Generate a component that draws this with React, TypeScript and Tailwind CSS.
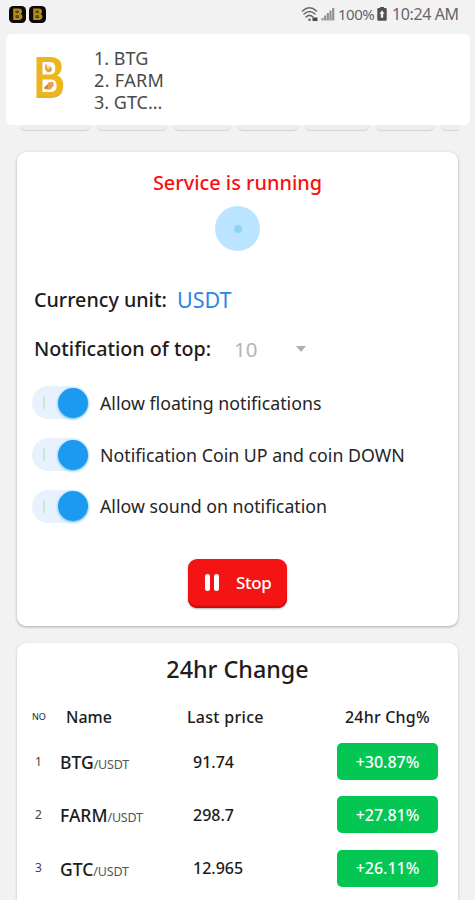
import React from 'react';

function AppBadge() {
  return (
    <svg className="h-[17px] w-[17px]" viewBox="0 0 17 17">
      <rect x="0" y="0" width="17" height="17" rx="4.5" fill="#0b0a08" />
      <path
        fillRule="evenodd"
        fill="#b58a1c"
        d="M4.200 2.500h5.600c2 0 3.200 1 3.200 2.900 0 1.200-.5 2-1.300 2.500 1.100.4 1.700 1.400 1.700 2.700 0 2.200-1.400 3.500-3.600 3.500H4.200zM6.700 4.800v2h2.800V4.800zM6.700 9.500v2.300h3V9.500z"
      />
      <path d="M7 5.800h2.200M7.200 10.600h2.200" stroke="#8a6516" strokeWidth="1" />
    </svg>
  );
}

function CoinLogo() {
  return (
    <svg className="h-[41px] w-[28px]" viewBox="0 0 28 41">
      <path
        fillRule="evenodd"
        fill="#edb61c"
        d="M0.500 0H14c7.200 0 11.700 3.300 11.700 9.800 0 4.500-1.800 7.300-5 8.800 4.200 1.300 6.600 4.500 6.600 9.600C27.300 36.300 22.500 40.500 15 40.500H0.500zM6 5v12.500h8.500c3.200 0 4.800-2.100 4.800-6.200S17.700 5 14 5zM6 22.500v12.500h9c3.700 0 5.600-2.200 5.600-6.200s-2-6.300-5.600-6.300z"
      />
      <path d="M6 5v12.500M6 22.500V35" fill="none" stroke="#d9a640" strokeWidth="0.800" />
      <path d="M0.500 40.300H15c5 0 8.700-1.800 10.800-4.800" fill="none" stroke="#cfa13a" strokeWidth="0.900" />
      <path d="M10 7.500v5.500" stroke="#eab04a" strokeWidth="2.200" />
      <circle cx="12.800" cy="12.300" r="3" fill="#eaa03c" />
      <circle cx="12.300" cy="10.600" r="1.200" fill="#fff3cf" />
      <path d="M8 30.500l5.500-5v7l-5-.5z" fill="#df8420" />
      <path d="M12 25.500l5-.8v4l-1.800 3.500H12z" fill="#e9a14f" />
      <path d="M17.500 25.500v4.500" stroke="#b9e2e4" strokeWidth="1" />
    </svg>
  );
}

function StatusIcons() {
  return (
    <svg className="h-[16px] w-[36px]" viewBox="0 0 36 16">
      <g fill="none" stroke="#666" strokeWidth="1.500" strokeLinecap="round">
        <path d="M2.500 5Q9.500-1.500 16.500 5" />
        <path d="M4 8Q9.500 3 15 8" />
        <path d="M6 11Q9.500 7.800 13 11" />
      </g>
      <circle cx="9.500" cy="13.700" r="1.300" fill="#666" />
      <path d="M12.500 11.500h5v3.500h-5z" fill="#4a4a4a" />
      <g fill="#939393">
        <path d="M21.500 12h2v2.500h-2z" />
        <path d="M24 9.500h2.200v5H24z" />
        <path d="M26.700 7h2.200v7.500h-2.200z" />
        <path d="M29.400 4.500h2.200v10h-2.200z" />
        <path d="M32.100 2h2.200v12.500h-2.200z" />
      </g>
    </svg>
  );
}

function Battery() {
  return (
    <svg className="h-[14px] w-[10px]" viewBox="0 0 10 14">
      <path d="M3 0h4v2H3z" fill="#505050" />
      <rect x="0.300" y="1" width="9.400" height="12.800" rx="1.200" fill="#505050" />
      <path d="M5 3.200L7.500 6.800H6.200v4H3.800v-4H2.500z" fill="#f2f2f2" />
    </svg>
  );
}

function ToggleRow({ label }: { label: string }) {
  return (
    <div className="flex h-[51.7px] items-center">
      <div className="flex h-[33px] w-[57px] items-center rounded-full bg-[#e7f2fe] pl-[11px]">
        <div className="h-[13px] w-[2px] bg-[#cfe8d6]" />
        <div className="ml-[13px] h-[30px] w-[30px] rounded-full bg-[#1b9af0] shadow-[0_1px_3px_rgba(27,154,240,0.700)]" />
      </div>
      <span className="ml-[11px] pt-[1px] text-[17.750px] text-[#252525]">{label}</span>
    </div>
  );
}

const toggles = [
  'Allow floating notifications',
  'Notification Coin UP and coin DOWN',
  'Allow sound on notification',
];

const coins = [
  { no: 1, name: 'BTG', price: '91.74', change: '+30.87%' },
  { no: 2, name: 'FARM', price: '298.7', change: '+27.81%' },
  { no: 3, name: 'GTC', price: '12.965', change: '+26.11%' },
];

const chips = ['w-[70px]', 'w-[70px]', 'w-[57px]', 'w-[60px]', 'w-[64px]', 'w-[58px]'];

export default function App() {
  return (
    <div className="flex h-[900px] w-[475px] flex-col overflow-hidden whitespace-nowrap bg-[#f2f2f2] font-['Noto_Sans',sans-serif] text-[#1c1c1c]">
      <header className="flex h-[34px] shrink-0 items-center pb-[6px] pl-[9px] pr-[17px] text-[#666]">
        <AppBadge />
        <div className="w-[3px]" />
        <AppBadge />
        <div className="ml-auto flex items-center">
          <StatusIcons />
          <span className="ml-[2px] w-[36px] text-[15px] tracking-[-0.500px]">100%</span>
          <div className="ml-[3px] flex"><Battery /></div>
          <span className="ml-[5px] w-[66px] text-[16px] tracking-[-0.400px]">10:24 AM</span>
        </div>
      </header>

      <section className="ml-[6px] flex h-[91px] w-[464px] shrink-0 items-center rounded-[6px] bg-white pl-[30px]">
        <div className="flex pb-[4px]"><CoinLogo /></div>
        <div className="ml-[30px] text-[18px] leading-[22px] text-[#4a4a4a]">
          <div>1. BTG</div>
          <div className="tracking-[0.350px]">2. FARM</div>
          <div>3. GTC...</div>
        </div>
      </section>

      <div className="ml-[20px] flex h-[27px] w-[439px] shrink-0 gap-[7px] overflow-hidden">
        {chips.map((w, i) => (
          <div key={i} className={`h-[5px] shrink-0 rounded-b-[6px] bg-[#eeeeee] shadow-[0_1px_1px_#d2d2d2] ${w}`} />
        ))}
        <div className="h-[5px] w-[40px] shrink-0 rounded-b-[6px] bg-[#eeeeee] shadow-[0_1px_1px_#d2d2d2]" />
      </div>

      <section className="ml-[17px] flex h-[474px] w-[441px] shrink-0 flex-col rounded-[9px] bg-white px-[15px] shadow-[0_1px_3px_rgba(0,0,0,0.300)]">
        <div className="mt-[16px] h-[30px] text-center text-[19.900px] font-medium leading-[30px] text-[#fa1010]">Service is running</div>
        <div className="ml-[183px] mt-[8px] flex h-[45px] w-[45px] items-center justify-center rounded-full bg-[#bae4ff]">
          <div className="h-[8px] w-[8px] rounded-full bg-[#8fd3fb]" />
        </div>
        <div className="mt-[34px] flex h-[30px] items-center pl-[2px] text-[19.700px]">
          <span className="w-[143px] font-medium">Currency unit:</span>
          <span className="text-[21.500px] text-[#2b86e8]">USDT</span>
        </div>
        <div className="mt-[19px] flex h-[30px] items-center pl-[2px] text-[19.700px]">
          <span className="w-[200px] font-medium">Notification of top:</span>
          <span className="w-[62px] text-[20.500px] text-[#b5b5b5]">10</span>
          <div className="h-0 w-0 border-x-[5px] border-t-[6px] border-x-transparent border-t-[#b0b0b0]" />
        </div>
        <div className="mt-[13px]">
          {toggles.map((label) => (
            <ToggleRow key={label} label={label} />
          ))}
        </div>
        <button className="ml-[156px] mt-[27px] flex h-[49px] w-[99px] shrink-0 items-center rounded-[9px] bg-[#f51414] pl-[17px] text-white shadow-[inset_0_-2px_1px_#c90d0d,0_1px_2px_rgba(0,0,0,0.300)]">
          <span className="mb-[3px] h-[17px] w-[5px] rounded-[2.500px] bg-white" />
          <span className="mb-[3px] ml-[4px] h-[17px] w-[5px] rounded-[2.500px] bg-white" />
          <span className="mb-[2px] ml-[17px] text-[17px] font-medium tracking-[-0.300px]">Stop</span>
        </button>
      </section>

      <section className="ml-[17px] mt-[17px] h-[280px] w-[441px] shrink-0 rounded-[9px] bg-white shadow-[0_1px_3px_rgba(0,0,0,0.200)]">
        <h2 className="pt-[9px] text-center text-[23.300px] font-medium leading-[34px]">24hr Change</h2>
        <div className="mt-[15px] flex h-[31px] items-center pl-[15px] text-[16px] font-medium">
          <span className="w-[34px] text-[9px] font-normal">NO</span>
          <span className="w-[121px]">Name</span>
          <span className="w-[158px] tracking-[0.300px]">Last price</span>
          <span className="tracking-[0.200px]">24hr Chg%</span>
        </div>
        <div className="mt-[3px]">
          {coins.map((c) => (
            <div key={c.no} className="flex h-[53.300px] items-center pl-[18px]">
              <span className="w-[25px] text-[12px] text-[#444]">{c.no}</span>
              <span className="w-[133px] pt-px text-[17.500px] font-medium">
                {c.name}
                <span className="text-[12.500px] font-normal tracking-[-0.200px] text-[#555]">/USDT</span>
              </span>
              <span className="w-[144px] text-[16px] font-medium">{c.price}</span>
              <span className="flex h-[37px] w-[101px] items-center justify-center rounded-[5px] bg-[#04c653] text-[16px] font-medium text-white">{c.change}</span>
            </div>
          ))}
        </div>
      </section>
    </div>
  );
}
